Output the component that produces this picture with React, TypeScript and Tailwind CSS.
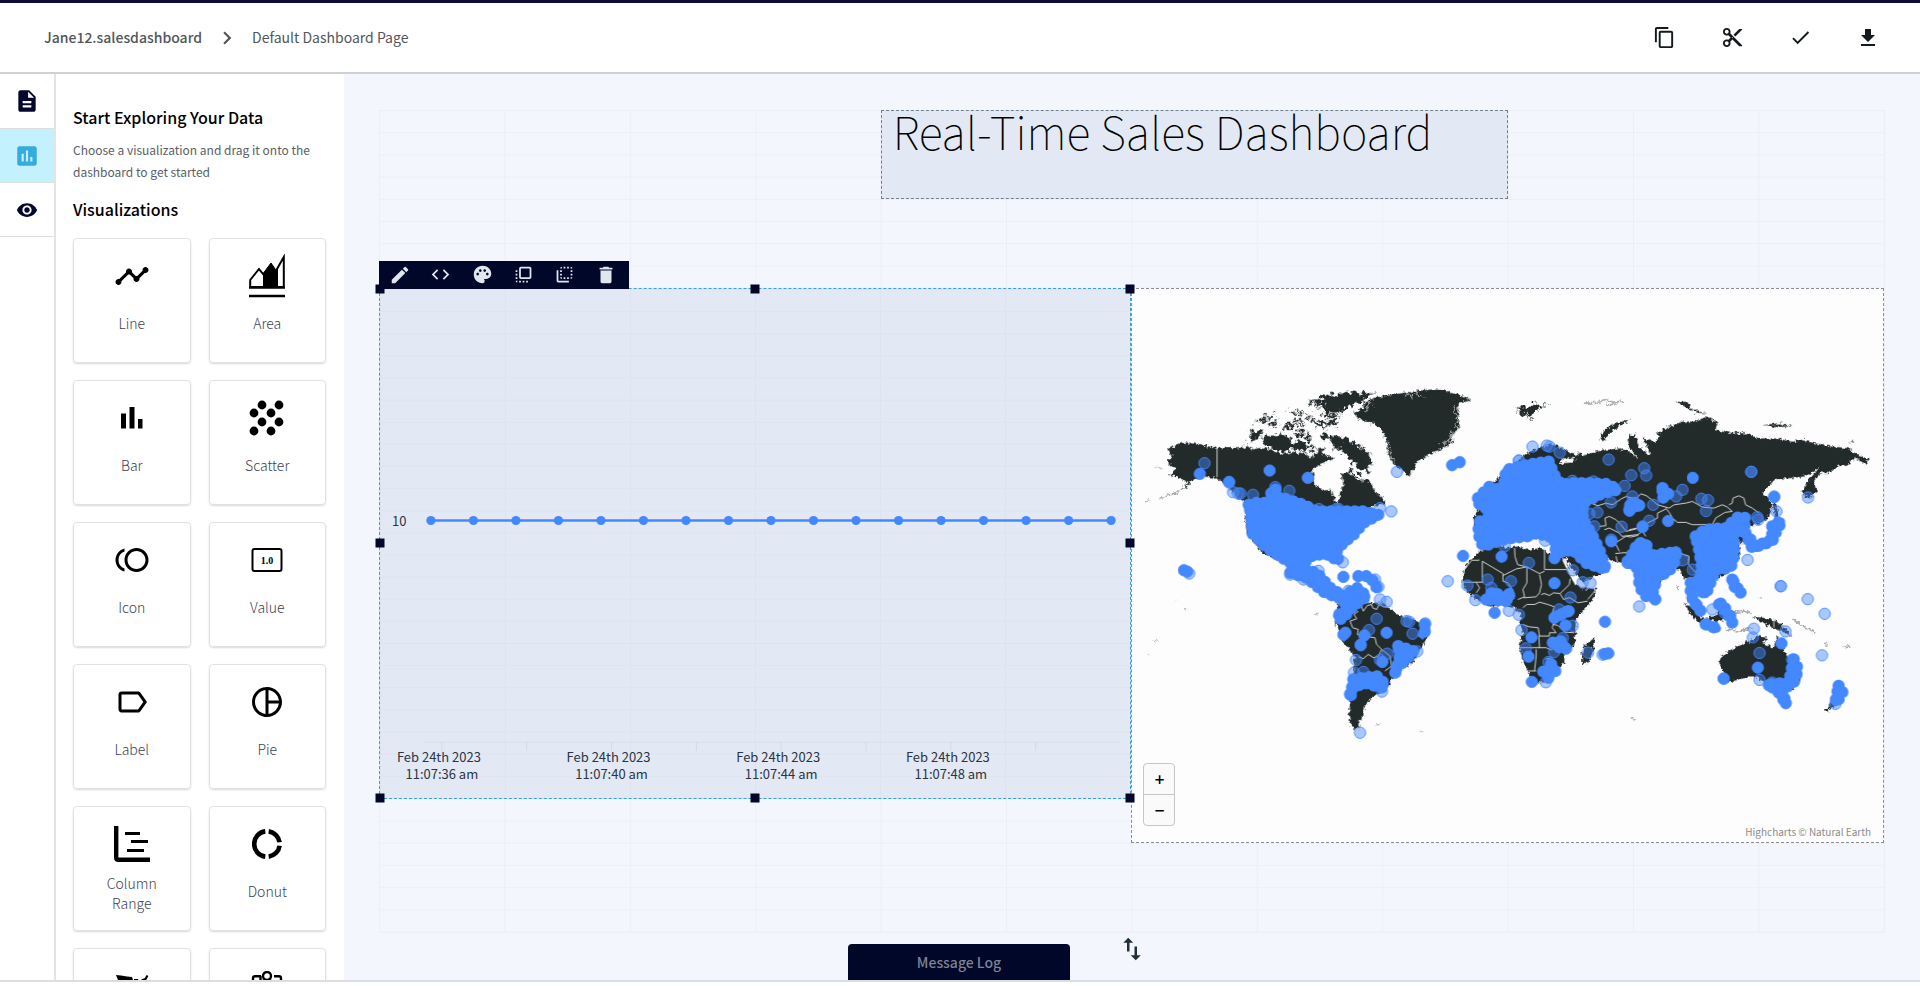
import type { ReactNode } from "react";
import {
  MdCheck,
  MdChevronRight,
  MdCode,
  MdContentCopy,
  MdContentCut,
  MdDelete,
  MdDescription,
  MdEdit,
  MdFileDownload,
  MdFlipToBack,
  MdFlipToFront,
  MdInsertChart,
  MdLabelOutline,
  MdPalette,
  MdPieChartOutline,
  MdSwapVert,
  MdTimeline,
  MdToll,
  MdVisibility,
} from "react-icons/md";

type Point = [number, number];

function AreaIcon() {
  return (
    <svg width="36" height="44" viewBox="0 0 36 44" fill="none" stroke="#000">
      <path d="M1.2 33V26L10 15l5 6V33zM28 33V15L34.8 3V33z" strokeWidth="2" />
      <path d="M14.500 33V19l7.500-10 5.500 8v16z" fill="#000" />
      <path d="M0 33.500h36M0 42h36" strokeWidth="2.4" />
    </svg>
  );
}

function BarIcon() {
  return (
    <svg width="22" height="22" viewBox="0 0 22 22">
      <path d="M0 6.500h5V21.500H0zM8.500 0h5v21.500h-5zM17 12h4.500v9.500H17z" />
    </svg>
  );
}

function ScatterIcon() {
  const dots: Point[] = [
    [13, 5], [30, 5], [5, 13], [22, 13], [13, 22], [30, 22], [5, 31], [22, 31],
  ];
  return (
    <svg width="36" height="36" viewBox="0 0 36 36">
      {dots.map(([x, y]) => (
        <circle key={`${x}-${y}`} cx={x} cy={y} r="4.4" />
      ))}
    </svg>
  );
}

function ValueIcon() {
  return (
    <svg width="32" height="26" viewBox="0 0 32 26">
      <rect x="1.500" y="2" width="29" height="22" rx="2" fill="none" stroke="#000" strokeWidth="2" />
      <text x="16" y="17" textAnchor="middle" className="font-['Liberation_Serif',serif] text-[10px] font-bold">
        1.0
      </text>
    </svg>
  );
}

function ColumnRangeIcon() {
  return (
    <svg width="36" height="36" viewBox="0 0 36 36" fill="none" stroke="#000">
      <path d="M2.200 0V31.500q0 2.300 2.300 2.300H36" strokeWidth="4.400" />
      <path d="M11 7.500h15M17 15.500h17M13 24.500h17" strokeWidth="3" />
    </svg>
  );
}

function DonutIcon() {
  return (
    <svg width="30" height="30" viewBox="0 0 30 30" fill="none" stroke="#000" strokeWidth="4.600">
      <path d="M13.300 2.400A12.700 12.700 0 0 0 13.300 27.600" />
      <path d="M16.700 2.400A12.700 12.700 0 0 1 27.600 13.300" />
      <path d="M27.600 16.700A12.700 12.700 0 0 1 16.700 27.600" />
    </svg>
  );
}

function GaugeIcon() {
  return (
    <svg width="34" height="24" viewBox="0 0 34 24">
      <path d="M1 1l5 .5 6 1 5 .5 1 3H3zM2 6h12l1 14H3zM19 5l4 0 1 3-5 12z" />
      <path d="M32.500 1.500l-2 3.500-3 1-2 8" fill="none" stroke="#000" strokeWidth="2.200" />
    </svg>
  );
}

function MapIcon() {
  return (
    <svg width="32" height="30" viewBox="0 0 32 30" fill="none" stroke="#000" strokeWidth="2.400">
      <circle cx="16" cy="5" r="4" />
      <path d="M11 9l5 9 5-9M10 5.200H4q-2 0-2 2V28h28V7.200q0-2-2-2h-5M9.500 5v9" />
    </svg>
  );
}

const visualizations: { name: string; icon: ReactNode; iconOnly?: boolean }[] = [
  { name: "Line", icon: <MdTimeline size={36} /> },
  { name: "Area", icon: <AreaIcon /> },
  { name: "Bar", icon: <BarIcon /> },
  { name: "Scatter", icon: <ScatterIcon /> },
  { name: "Icon", icon: <MdToll size={36} /> },
  { name: "Value", icon: <ValueIcon /> },
  { name: "Label", icon: <MdLabelOutline size={36} /> },
  { name: "Pie", icon: <MdPieChartOutline size={36} /> },
  { name: "Column Range", icon: <ColumnRangeIcon /> },
  { name: "Donut", icon: <DonutIcon /> },
  { name: "Gauge", icon: <GaugeIcon />, iconOnly: true },
  { name: "Map", icon: <MapIcon />, iconOnly: true },
];

const headerActions = [
  { label: "Copy", icon: <MdContentCopy size={23} /> },
  { label: "Cut", icon: <MdContentCut size={23} /> },
  { label: "Save", icon: <MdCheck size={23} /> },
  { label: "Download", icon: <MdFileDownload size={24} /> },
];

const widgetActions = [
  { label: "Edit", icon: <MdEdit size={22} /> },
  { label: "Code", icon: <MdCode size={21} /> },
  { label: "Style", icon: <MdPalette size={21} /> },
  { label: "Bring to front", icon: <MdFlipToFront size={21} /> },
  { label: "Send to back", icon: <MdFlipToBack size={21} /> },
  { label: "Delete", icon: <MdDelete size={22} /> },
];

const handles = [
  "left-0 top-0",
  "left-1/2 top-0",
  "left-full top-0",
  "left-0 top-1/2",
  "left-full top-1/2",
  "left-0 top-full",
  "left-1/2 top-full",
  "left-full top-full",
];

function LineChart() {
  const points = Array.from({ length: 17 }, (_, i) => 51 + i * 42.600);
  const ticks = Array.from({ length: 8 }, (_, i) => 62 + i * 85);
  const labels = ["11:07:36 am", "11:07:40 am", "11:07:44 am", "11:07:48 am"];

  return (
    <svg viewBox="0 0 752 510" className="h-full w-full" role="img" aria-label="Line chart">
      <path d="M44 454H742" stroke="#d8dde8" />
      {ticks.map((x) => (
        <path key={x} d={`M${x} 454v9`} stroke="#d3dae6" />
      ))}
      <path d="M51 232H733" stroke="#4488ff" strokeWidth="2.400" />
      {points.map((x) => (
        <circle key={x} cx={x} cy="232" r="4.600" fill="#4488ff" />
      ))}
      <text x="12" y="237" fill="#2c3444" className="text-[13px]">
        10
      </text>
      {labels.map((label, i) => (
        <g key={label} fill="#2c3444" className="text-[13px]">
          <text x={59 + i * 170} y="474" textAnchor="middle">
            Feb 24th 2023
          </text>
          <text x={62 + i * 170} y="491" textAnchor="middle">
            {label}
          </text>
        </g>
      ))}
    </svg>
  );
}

/* Western half: Americas and Greenland */
const westLand = [
  "M110 240L140 222 172 217 205 225 260 233 330 235 345 228 370 238 400 232 430 245 460 252 490 246 520 250 540 262 560 250 562 235 585 232 575 255 600 260 612 268 585 275 565 290 545 300 550 315 552 345 580 362 605 360 615 395 625 395 630 370 640 345 635 315 650 305 670 315 690 335 710 325 725 345 740 370 760 385 765 400 730 410 700 420 760 430 700 470 640 540 500 590 395 550 350 490 345 400 320 385 290 350 260 325 215 320 190 330 165 352 130 372 85 388 150 362 170 340 150 325 118 315 135 300 108 275 125 262z",
  "M670 130L700 110 710 92 740 82 800 72 860 62 910 58 950 62 975 72 1025 88 985 100 985 130 990 170 965 200 968 220 930 240 890 258 860 280 850 300 835 322 815 300 790 280 775 250 770 210 750 175 720 155 690 150z",
  "M625 700L700 700 760 700 800 735 850 750 900 775 890 810 865 850 850 880 810 900 790 925 770 960 740 975 725 985 705 1010 700 1040 685 1065 690 1080 665 1075 656 1040 662 990 670 930 675 860 640 820 615 760 620 730z",
];

/* Canadian archipelago, drawn with rougher coasts */
const arcticIslands = [
  "M562 88L600 75 625 68 680 64 735 72 705 88 670 106 640 118 628 128 600 128 575 118 560 112 590 105 555 100z",
  "M528 98L545 92 560 100 545 106z",
  "M575 132L612 130 632 138 610 146 580 142z",
  "M540 150L570 154 620 153 630 162 590 168 548 166z",
  "M355 208L362 182 385 180 400 188 388 202 372 212z",
  "M395 205L420 192 440 200 455 190 475 200 482 218 512 212 530 225 532 245 505 240 480 236 455 246 430 238 410 228z",
  "M375 158L395 145 415 148 400 160z",
  "M398 140L420 130 440 134 428 144z",
  "M415 160L430 154 445 160 435 168z",
  "M455 165L480 158 500 164 490 174 465 174z",
  "M470 120L500 126 488 134zM505 118L520 130 508 134zM490 146L518 148 512 156 490 154zM500 160L528 164 515 172zM526 134L548 140 530 144z",
  "M490 186L518 184 520 200 500 204zM528 192L540 188 545 210 532 215z",
  "M532 230L545 222 555 240 542 246z",
  "M568 198L585 188 595 200 590 214 574 212z",
  "M600 200L615 195 632 206 650 205 668 212 682 226 700 232 705 245 725 258 716 268 728 285 712 292 716 312 698 306 685 292 668 280 655 262 640 250 622 240 605 222z",
  "M612 232L630 236 625 246zM655 302L672 300 690 318 700 332 680 322z",
];

const eastLand = [
  "M240 270L260 250 300 232 340 222 410 255 405 265 370 265 360 280 400 278 420 245 430 258 470 245 500 240 540 235 570 245 595 265 570 230 565 205 585 190 600 230 625 255 635 250 610 205 650 215 665 195 650 190 690 170 730 155 760 155 800 142 838 155 830 180 870 188 920 190 960 205 1010 205 1060 215 1090 210 1130 220 1180 230 1230 235 1260 258 1293 268 1280 282 1250 265 1225 285 1195 290 1170 310 1145 308 1125 335 1135 365 1110 385 1090 375 1098 345 1120 320 1140 295 1100 320 1060 325 1010 328 970 370 990 385 1000 410 985 450 950 465 920 470 930 520 900 520 905 560 880 600 830 630 790 660 740 630 720 600 700 590 660 640 640 690 610 680 590 600 550 580 520 575 490 560 460 530 490 610 430 638 400 600 370 550 380 500 240 510 110 500 100 450 150 350 190 310z",
  "M105 560L118 548 165 522 200 535 240 530 262 540 310 535 330 555 365 545 385 590 400 630 425 655 472 658 460 690 440 715 410 750 408 790 405 825 375 850 375 880 350 900 320 935 280 945 268 910 250 880 240 830 250 790 240 755 245 735 220 715 190 705 150 712 110 690 80 665 68 640 72 600 90 575z",
  "M465 805L462 840 448 880 428 882 427 850 440 825z",
  "M575 150L530 158 500 175 480 205 495 215 505 195 540 168z",
  "M710 95L745 95 755 115 800 130 770 128 740 112zM975 165L1020 160 1060 170 1010 172zM1230 214L1250 214 1240 218z",
  "M735 700L760 715 795 755 775 758 750 730zM800 745L830 740 850 690 870 720 860 750 830 758z",
  "M940 740L1000 750 1040 775 1060 800 1010 778 970 760z",
  "M845 860L890 835 930 815 960 800 985 805 975 825 1005 835 1015 800 1030 830 1045 860 1080 885 1085 930 1060 965 1020 975 980 945 960 925 920 925 870 940 850 935 855 910 840 885z",
  "M1155 1025L1180 1000 1215 960 1190 1010 1165 1028z",
  "M1000 395L1012 400 1020 440 1010 450z",
];

const svalbard = "M235 112L262 110 280 102 325 106 300 116 285 128 272 145 262 130 240 130z";

const westBorders =
  "M260 233V322M685 725L672 735 680 748 660 755 668 775 685 780 682 795 700 800 735 805 740 825 755 840 745 862 730 865 715 855 700 868 685 862M690 700L700 725 712 708 725 705 728 715 740 720 748 705 760 712 790 712M755 840L780 860 785 890 765 905";

const eastBorders =
  "M118 570L118 572 96 572 72 602M128 575V640M70 638H130M128 575L190 612 190 635M190 618L230 598 262 592 300 612 315 605M225 535L226 560 234 585 262 592M315 535V600H385M262 595L262 640 250 660 255 682 235 690M300 615L306 645 300 670 290 682 252 685M305 675L315 672 330 678 342 670 362 672 372 690 390 684 415 700 445 695M190 635L205 640 215 655M110 640L120 655 110 670M215 655L222 680 215 700M250 715L262 705 285 705 300 698 325 705 345 712 336 735 343 760 338 775 350 790 330 790 330 800 298 800 300 835 240 835M250 765L268 772 296 775 300 800M298 835H320L335 842 350 832 375 810M290 840V860L285 905M265 905L290 905M318 870L335 865M340 765L355 768 375 788 405 790M362 672L390 645 392 628M445 690L470 660M360 720H380";

const asiaBorders =
  "M455 400L475 408 500 400 520 405 545 388 560 380 590 388 605 372 622 378 635 388 655 405 690 415 705 405 740 400 760 395 790 412 825 415 850 405 865 412 880 425 858 428 830 445 820 465 800 465 760 465 740 458 715 458 700 445 690 428 680 415M870 405L880 400 882 385 900 378 915 385 920 405 940 415 960 430M480 470L500 468 497 445 510 440 530 450 545 465 560 485 590 478 600 468M655 430L680 418M655 430L655 445 625 460M495 480L510 475 540 490 548 500 595 495 610 485 620 500M570 480L600 474M540 545L528 520 560 500 575 502 597 497M530 560L535 580M640 545L665 550 700 540 735 555 750 560 748 585 770 610M528 552L545 550 580 548 600 530M1005 745V775";

/* Areas where the markers are packed so densely that they merge */
const westClusters = [
  "M355 405L385 398 420 400 420 375 435 355 440 380 475 390 520 405 560 425 610 425 700 425 745 435 700 460 670 495 640 520 620 540 625 575 595 555 550 555 520 580 480 580 410 535 365 490 362 430z",
  "M480 610L530 625 585 670 640 690 650 720 620 740 635 750 670 710 710 680 680 655 640 680 600 655 560 610 510 595z",
  "M805 830L850 845 830 870 800 895 795 915 810 860z",
  "M670 930L740 920 765 945 755 955 700 940 665 960 662 980z",
  "M685 620L715 620 735 640 740 655",
  "M885 765L890 780 870 805",
];

const eastClusters = [
  "M115 385L150 350 190 365 200 300 240 290 290 280 330 275 340 310 365 345 400 340 460 340 510 345 535 360 490 370 430 400 430 420 430 450 455 490 480 540 500 600 440 580 400 540 350 550 345 505 290 490 265 500 215 505 190 510 130 530 115 490 120 455 150 455 145 420 115 400z",
  "M770 500L800 480 860 475 900 440 920 445 915 480 885 490 885 560 875 595 830 600 810 650 800 675 770 650 790 600 780 540z",
  "M920 490L950 530 1000 510 1000 465 1028 455 1010 490 1000 515 940 535z",
  "M565 575L585 545 595 520 620 520 630 560 685 550 710 550 710 570 690 605 650 625 645 665 620 680 600 650 600 600z",
  "M755 640L755 680 785 725 760 690z",
  "M800 765L835 778 810 768z",
  "M880 630L885 650 908 672 895 655z",
  "M840 705L880 745 880 760 850 700z",
  "M1065 870L1078 900 1065 940 1030 960 1040 1000 1020 970 990 945 1050 940z",
  "M1200 950L1213 965 1200 990 1190 1000z",
  "M140 690L160 665 200 690 212 665 205 695z",
  "M335 885L350 910 310 905 330 930z",
  "M340 820L370 815 375 840 350 830z",
  "M570 420L600 405 575 395z",
  "M670 355L690 375 670 385z",
  "M345 745L385 725z",
];

const westDots: Point[] = [
  [222, 280], [296, 338], [308, 367], [323, 371], [330, 371], [368, 375], [435, 352], [477, 363],
  [566, 418], [618, 418], [626, 418], [750, 415], [784, 425], [801, 306], [565, 604], [638, 578],
  [176, 612], [480, 615], [520, 630], [655, 664], [735, 630], [745, 652], [750, 690], [770, 697],
  [740, 748], [717, 782], [830, 755], [838, 757], [848, 793], [886, 762], [862, 846], [772, 853],
  [750, 872], [678, 872], [672, 910], [700, 908], [756, 967], [690, 1091], [692, 828], [1168, 272],
];

const westSolidDots: Point[] = [
  [208, 312], [296, 336], [418, 302], [533, 324], [160, 602], [170, 606], [640, 622], [967, 286],
  [990, 277], [640, 796], [646, 790], [770, 790], [703, 798], [692, 826], [757, 878], [660, 975],
];

const eastDots: Point[] = [
  [279, 230], [322, 227], [330, 230], [361, 248], [508, 269], [576, 316], [615, 295], [621, 317],
  [937, 306], [1108, 383], [399, 333], [462, 335], [500, 342], [556, 348], [515, 398], [579, 380],
  [642, 405], [711, 380], [730, 360], [787, 387], [807, 391], [801, 424], [474, 428], [430, 420],
  [450, 432], [465, 470], [547, 471], [630, 453], [610, 470], [1013, 425], [1006, 380], [958, 450],
  [955, 442], [926, 571], [1026, 650], [1107, 689], [1158, 733], [1150, 858], [600, 711], [24, 635],
  [83, 648], [144, 630], [155, 655], [214, 635], [107, 692], [208, 724], [238, 736], [246, 782],
  [268, 580], [400, 602], [430, 638], [453, 640], [393, 684], [359, 720], [400, 769], [370, 806],
  [259, 837], [344, 848], [327, 878], [319, 939], [446, 850], [317, 513], [195, 530], [420, 555],
  [945, 778], [942, 804], [1040, 786], [962, 851], [962, 932], [1000, 940], [1060, 871], [854, 928],
  [820, 720], [857, 730], [648, 688], [595, 585], [650, 590], [730, 572], [760, 600], [1020, 970],
  [1190, 1004], [490, 856], [516, 510], [238, 272], [937, 306], [1026, 650],
];

const eastSolidDots: Point[] = [
  [761, 324], [687, 454], [671, 357], [571, 423], [600, 407], [70, 559], [186, 561], [345, 641],
  [345, 566], [165, 730], [276, 804], [267, 862], [277, 938], [497, 757], [507, 852], [378, 768],
  [388, 725], [957, 895], [1028, 822], [1006, 382], [854, 928], [1041, 1002], [565, 580], [516, 515],
  [648, 690], [380, 838], [496, 854], [990, 948], [610, 472], [710, 548],
];

function Markers({ clusters, dots, solid }: { clusters: string[]; dots: Point[]; solid: Point[] }) {
  return (
    <g fill="#4488ff" stroke="#4488ff">
      {clusters.map((d) => (
        <g key={d}>
          <path d={d} stroke="none" />
          <path d={d} fill="none" strokeWidth="37" strokeLinecap="round" strokeDasharray="0 24" />
          <path d={d} fill="none" strokeWidth="22" strokeLinejoin="round" />
        </g>
      ))}
      {dots.map(([x, y], i) => (
        <circle key={i} cx={x} cy={y} r="17" fillOpacity="0.45" strokeOpacity="0.9" strokeWidth="3" />
      ))}
      {solid.map(([x, y], i) => (
        <circle key={i} cx={x} cy={y} r="17" strokeWidth="3" />
      ))}
    </g>
  );
}

function WorldMap() {
  return (
    <svg viewBox="5 -244 2256 1665" className="h-full w-full" role="img" aria-label="World map">
      <defs>
        <filter id="coast" x="-5%" y="-5%" width="110%" height="110%">
          <feTurbulence type="fractalNoise" baseFrequency="0.1" numOctaves="2" seed="4" />
          <feDisplacementMap in="SourceGraphic" scale="18" xChannelSelector="R" yChannelSelector="G" />
        </filter>
        <filter id="fjords" x="-10%" y="-10%" width="120%" height="120%">
          <feTurbulence type="fractalNoise" baseFrequency="0.07" numOctaves="3" seed="9" />
          <feDisplacementMap in="SourceGraphic" scale="38" xChannelSelector="R" yChannelSelector="G" />
        </filter>
      </defs>
      <g filter="url(#coast)" fill="#20292c" stroke="#a9abab" strokeWidth="2">
        {westLand.map((d) => (
          <path key={d} d={d} />
        ))}
        <g transform="translate(930)">
          {eastLand.map((d) => (
            <path key={d} d={d} />
          ))}
          <path
            d="M435 100L480 96 500 88 520 98 555 92M500 105L530 102M1060 745L1085 765 1130 792M860 780L900 785 940 775M885 730L920 725 940 735M1158 820L1166 832M1218 832L1232 830M574 1046L586 1050M717 650V664M960 686h6"
            fill="none"
            strokeWidth="5"
          />
        </g>
        <path
          d="M76 292L96 296M44 394L56 391M552 736L566 734M735 1068L752 1066M870 1084L884 1090M68 812L84 816M52 856h8M130 694h6M162 720h6"
          fill="none"
          strokeWidth="3"
        />
      </g>
      <g filter="url(#fjords)" fill="#20292c" stroke="#a9abab" strokeWidth="3">
        {arcticIslands.map((d) => (
          <path key={d} d={d} />
        ))}
        <path d={svalbard} transform="translate(930)" />
        <path
          d="M985 110L975 130 985 150 980 170 970 190 962 205 935 225M772 215L778 245 790 270M820 78L850 72 880 80M700 118L730 100"
          fill="none"
          strokeWidth="5"
        />
      </g>
      <g fill="none" stroke="#d5d5d0" strokeWidth="3" strokeLinejoin="round">
        <path d={westBorders} />
        <g transform="translate(930)">
          <path d={eastBorders} />
          <path d={asiaBorders} />
        </g>
      </g>
      <path d="M1298 560L1318 595 1345 640 1338 648 1320 615 1300 575z" fill="#fdfdfd" />
      <Markers clusters={westClusters} dots={westDots} solid={westSolidDots} />
      <g transform="translate(930)">
        <Markers clusters={eastClusters} dots={eastDots} solid={eastSolidDots} />
      </g>
    </svg>
  );
}

export default function App() {
  return (
    <div className="flex h-screen flex-col overflow-hidden border-t-3 border-[#0d0a38] bg-white pb-1 font-['Noto_Sans_CJK_SC',sans-serif] text-black">
      {/* Header */}
      <header className="flex h-[71px] shrink-0 items-center justify-between border-b-2 border-[#cfd0d3] pr-8 pl-11">
        <nav aria-label="Breadcrumb" className="flex items-center gap-3 text-[14px] text-[#51565b]">
          <a href="#dashboard" className="font-medium">
            Jane12.salesdashboard
          </a>
          <MdChevronRight size={26} />
          <a href="#page">Default Dashboard Page</a>
        </nav>
        <div className="flex gap-7 text-[#151a1c]">
          {headerActions.map((action) => (
            <button key={action.label} type="button" aria-label={action.label} className="flex size-10 items-center justify-center">
              {action.icon}
            </button>
          ))}
        </div>
      </header>

      <div className="flex min-h-0 flex-1 border-b-2 border-[#dcdde2]">
        {/* Icon rail */}
        <nav aria-label="Sections" className="w-14 shrink-0 border-r-2 border-[#e3e4e6] text-[#05062d]">
          <button type="button" aria-label="Pages" className="flex h-[54px] w-full items-center justify-center">
            <MdDescription size={26} />
          </button>
          <button
            type="button"
            aria-label="Visualizations"
            className="flex h-[55px] w-full items-center justify-center border-y border-[#dcdfe2] bg-[#c4f1fe] text-[#35abe0]"
          >
            <MdInsertChart size={26} />
          </button>
          <button type="button" aria-label="Preview" className="flex h-[54px] w-full items-center justify-center border-b border-[#dcdfe2]">
            <MdVisibility size={22} />
          </button>
        </nav>

        {/* Visualization picker */}
        <aside className="w-[288px] shrink-0 overflow-hidden px-[17px] pt-[30px]">
          <h2 className="text-[16px] leading-[26px] font-medium">Start Exploring Your Data</h2>
          <p className="mt-[9px] text-[12px] leading-[22px] text-[#5a5e66]">
            Choose a visualization and drag it onto the dashboard to get started
          </p>
          <h2 className="mt-[13px] text-[16px] leading-[26px] font-medium">Visualizations</h2>
          <div className="mt-4 grid w-[253px] grid-cols-2 gap-x-[18px] gap-y-[17px]">
            {visualizations.map((item) => (
              <button
                key={item.name}
                type="button"
                draggable
                aria-label={item.name}
                className="flex h-[125px] flex-col items-center rounded border border-[#dfe2e4] px-6 shadow-[0_1px_2px_#00000026]"
              >
                <span className="flex h-[74px] shrink-0 items-center">{item.icon}</span>
                {!item.iconOnly && (
                  <span className={`flex flex-1 text-[14px] leading-5 font-light text-[#3d4158] ${item.name.includes(" ") ? "-mt-2" : ""}`}>
                    {item.name}
                  </span>
                )}
              </button>
            ))}
          </div>
        </aside>

        {/* Dashboard canvas */}
        <main className="relative min-w-0 flex-1 bg-[#f4f6fe] px-[35px] pt-9 pb-[47px]">
          <div className="grid h-full grid-cols-12 grid-rows-[repeat(37,minmax(0,1fr))] border-r border-b border-[#eeeff4] bg-[linear-gradient(to_right,#eeeff4_1px,transparent_1px),linear-gradient(to_bottom,#eeeff4_1px,transparent_1px)] bg-size-[calc(100%/12)_calc(100%/37)]">
            <section className="col-span-5 col-start-5 row-span-4 row-start-1 border border-dashed border-[#747f94] bg-[#e2e9f4] px-[11px]">
              <h1 className="text-[45px] leading-10 font-thin whitespace-nowrap text-black">Real-Time Sales Dashboard</h1>
            </section>

            <section className="relative col-span-6 col-start-1 row-start-9 row-end-32 border border-dashed border-[#3ba0d3] bg-[#e2e9f4] bg-[linear-gradient(to_right,#dde4ef_1px,transparent_1px),linear-gradient(to_bottom,#dde4ef_1px,transparent_1px)] bg-size-[calc(100%/6)_calc(100%/23)]">
              <LineChart />
              <div className="absolute bottom-full -left-px flex h-7 w-[250px] bg-[#000729] pr-0.5 text-[#dfe6ee]">
                {widgetActions.map((action) => (
                  <button key={action.label} type="button" aria-label={action.label} className="flex flex-1 items-center justify-center">
                    {action.icon}
                  </button>
                ))}
              </div>
              {handles.map((position) => (
                <span key={position} className={`absolute z-10 size-[9px] -translate-x-1/2 -translate-y-1/2 bg-[#000729] ${position}`} />
              ))}
            </section>

            <section className="relative col-span-6 col-start-7 row-start-9 row-end-34 border border-dashed border-[#8a8d98] bg-[#fdfdfe]">
              <WorldMap />
              <div className="absolute bottom-4 left-[11px] flex w-8 flex-col rounded-sm border border-[#c6c6c6] bg-[#fafafa] text-[17px] leading-[30px] font-medium">
                <button type="button" className="h-[31px] border-b border-[#c6c6c6]">
                  +
                </button>
                <button type="button" className="h-[30px]">
                  −
                </button>
              </div>
              <p className="absolute right-3 bottom-0 text-[10px] leading-5 text-[#8c8c8c]">Highcharts © Natural Earth</p>
            </section>
          </div>

          <button
            type="button"
            className="absolute bottom-0 left-[504px] h-9 w-[222px] rounded-t bg-[#000729] text-[14px] font-medium text-[#7d8294]"
          >
            Message Log
          </button>
          <button type="button" aria-label="Resize panel" className="absolute bottom-4 left-1/2 -translate-x-1/2 text-[#22302f]">
            <MdSwapVert size={30} />
          </button>
        </main>
      </div>
    </div>
  );
}
